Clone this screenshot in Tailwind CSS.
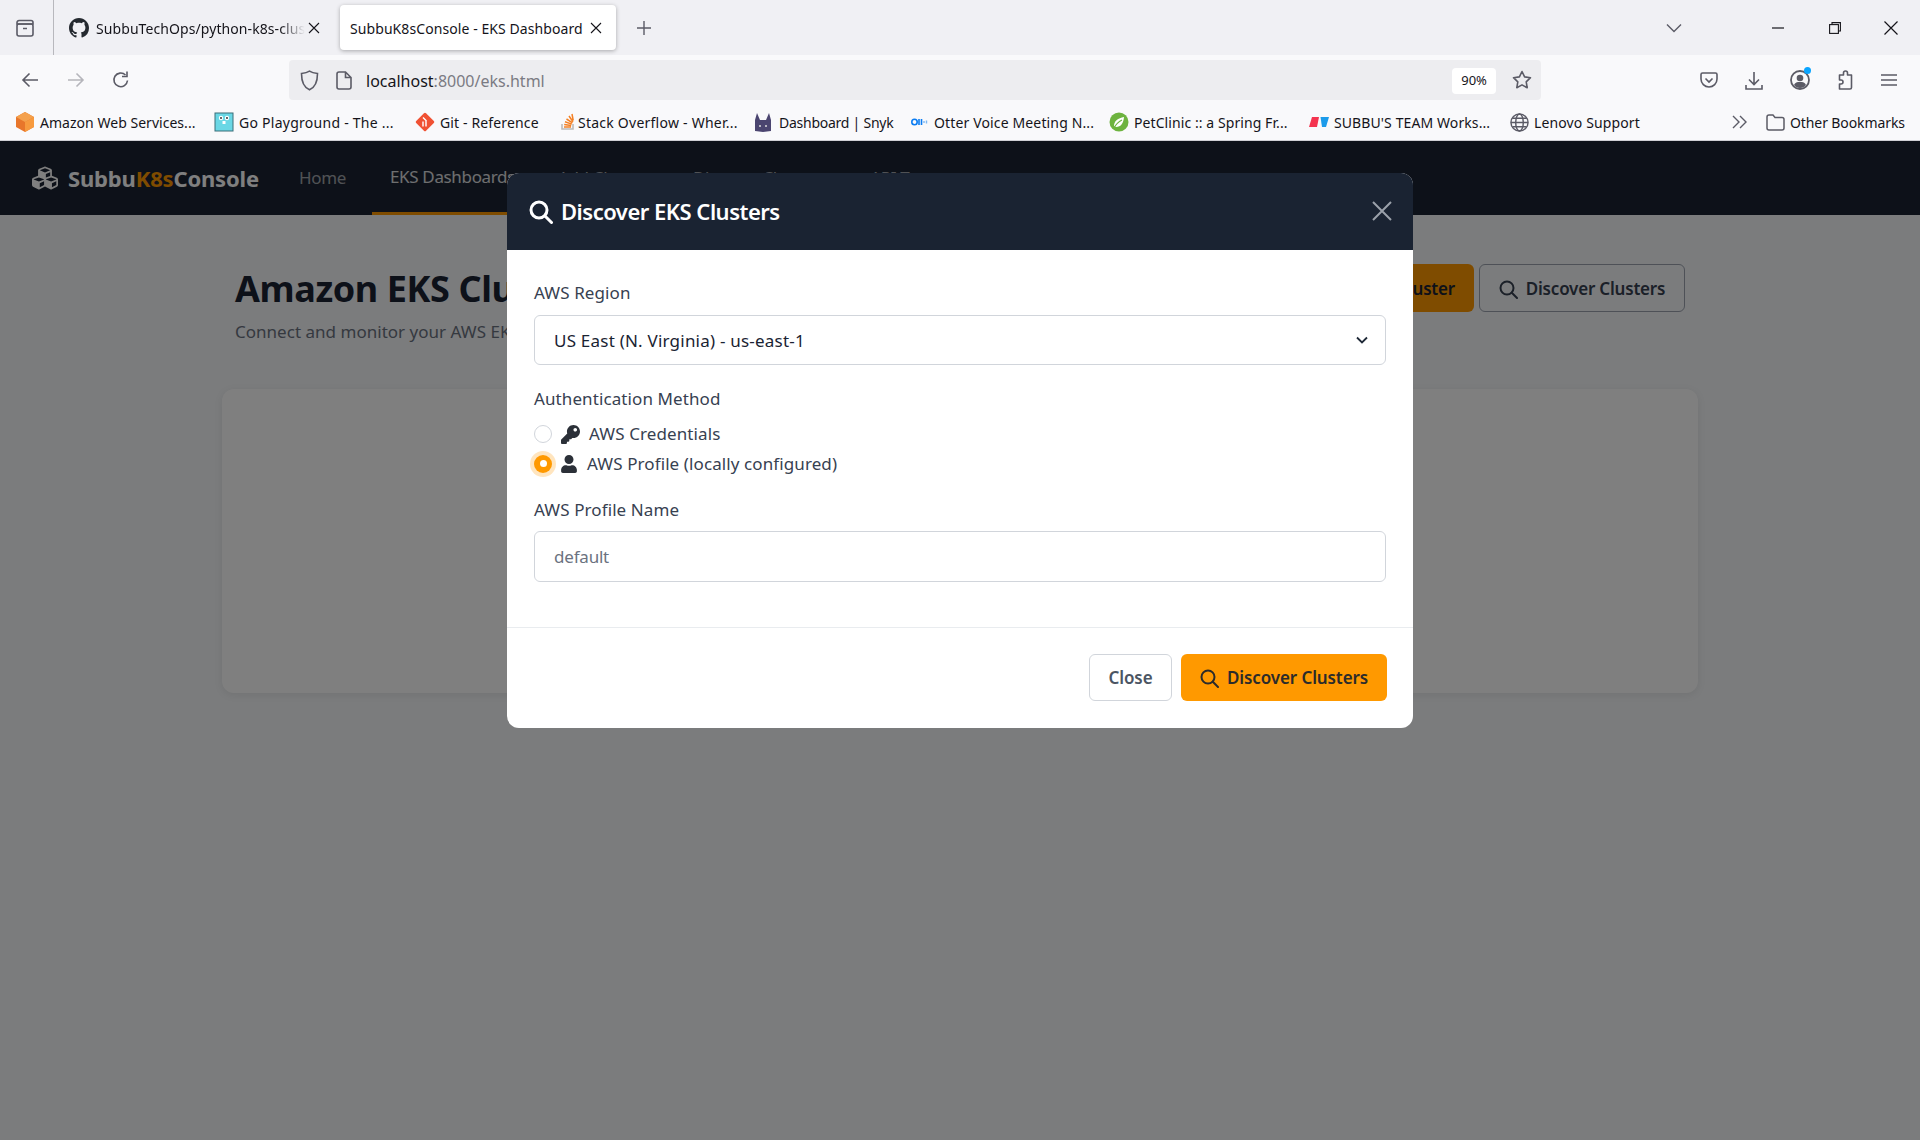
<!DOCTYPE html>
<html lang="en">
<head>
<meta charset="utf-8">
<title>SubbuK8sConsole - EKS Dashboard</title>
<script src="https://cdn.jsdelivr.net/npm/@tailwindcss/browser@4"></script>
</head>
<body class="w-[1920px] h-[1140px] overflow-hidden bg-[#f6f8fa] font-['Noto_Sans',sans-serif] flex flex-col">

<!-- tab strip -->
<div class="h-[55px] shrink-0 bg-[#f0f0f4] flex items-center text-[14px] tracking-[0.08px] text-[#15141a]">
  <div class="w-[54px] h-full shrink-0 border-r border-[#b8b8bd] flex items-center pl-[15px]">
    <svg class="w-[20px] h-[20px]" viewBox="0 0 20 20" fill="none" stroke="#5b5b66" stroke-width="1.6"><rect x="2" y="6" width="16" height="12" rx="2"/><path d="M4 2.5h12a2 2 0 0 1 2 2V6H2V4.5a2 2 0 0 1 2-2zM8 10.5h4"/></svg>
  </div>
  <div class="w-[286px] h-full shrink-0 flex items-center pl-[15px] relative">
    <svg class="w-[20px] h-[20px] shrink-0" viewBox="0 0 16 16" fill="#24292f"><path d="M8 0C3.58 0 0 3.58 0 8c0 3.54 2.29 6.53 5.47 7.59.4.07.55-.17.55-.38 0-.19-.01-.82-.01-1.49-2.01.37-2.53-.49-2.69-.94-.09-.23-.48-.94-.82-1.13-.28-.15-.68-.52-.01-.53.63-.01 1.08.58 1.23.82.72 1.21 1.87.87 2.33.66.07-.52.28-.87.51-1.07-1.78-.2-3.64-.89-3.64-3.95 0-.87.31-1.59.82-2.15-.08-.2-.36-1.02.08-2.12 0 0 .67-.21 2.2.82.64-.18 1.32-.27 2-.27.68 0 1.36.09 2 .27 1.53-1.04 2.2-.82 2.2-.82.44 1.1.16 1.92.08 2.12.51.56.82 1.27.82 2.15 0 3.07-1.87 3.75-3.65 3.95.29.25.54.73.54 1.48 0 1.07-.01 1.93-.01 2.2 0 .21.15.46.55.38A8.013 8.013 0 0016 8c0-4.42-3.58-8-8-8z"/></svg>
    <span class="ml-[7px] mt-[1px] w-[209px] overflow-hidden whitespace-nowrap [mask-image:linear-gradient(to_right,black_88%,transparent)]">SubbuTechOps/python-k8s-cluster</span>
    <svg class="absolute left-[254px] w-[12px] h-[12px]" viewBox="0 0 12 12" stroke="#15141a" stroke-width="1.1"><path d="M1 1l10 10M11 1L1 11"/></svg>
  </div>
  <div class="w-[276px] h-[45px] shrink-0 bg-white rounded-[4px] shadow-[0_1px_4px_rgba(0,0,0,0.3)] flex items-center pl-[10px] relative">
    <span class="mt-[1px] whitespace-nowrap">SubbuK8sConsole - EKS Dashboard</span>
    <svg class="absolute right-[14px] w-[12px] h-[12px]" viewBox="0 0 12 12" stroke="#15141a" stroke-width="1.1"><path d="M1 1l10 10M11 1L1 11"/></svg>
  </div>
  <svg class="ml-[20px] w-[16px] h-[16px]" viewBox="0 0 16 16" stroke="#5b5b66" stroke-width="1.4"><path d="M8 1v14M1 8h14"/></svg>
  <div class="ml-auto flex items-center h-full">
    <svg class="w-[16px] h-[10px]" viewBox="0 0 16 10" fill="none" stroke="#5b5b66" stroke-width="1.4"><path d="M1 1.500l7 7 7-7"/></svg>
    <svg class="ml-[90px] w-[12px] h-[2px]" viewBox="0 0 12 2" stroke="#15141a" stroke-width="1.2"><path d="M0 1h12"/></svg>
    <svg class="ml-[45px] w-[12px] h-[12px]" viewBox="0 0 12 12" fill="none" stroke="#15141a" stroke-width="1.1"><rect x=".6" y="2.6" width="8.8" height="8.8"/><path d="M3 2.6V.6h8.4V9H9.4"/></svg>
    <svg class="ml-[43px] mr-[22px] w-[14px] h-[14px]" viewBox="0 0 14 14" stroke="#15141a" stroke-width="1.2"><path d="M.5.5l13 13M13.500.5l-13 13"/></svg>
  </div>
</div>

<!-- toolbar -->
<div class="h-[45px] shrink-0 bg-[#f9f9fb] flex items-center">
  <div class="w-[289px] mt-[5px] shrink-0 flex items-center pl-[21px]">
    <svg class="w-[18px] h-[18px]" viewBox="0 0 18 18" fill="none" stroke="#5b5b66" stroke-width="1.6"><path d="M17 9H2M8.500 2.500L2 9l6.500 6.500"/></svg>
    <svg class="ml-[28px] w-[18px] h-[18px]" viewBox="0 0 18 18" fill="none" stroke="#b5b5bb" stroke-width="1.6"><path d="M1 9h15M9.500 2.500L16 9l-6.500 6.500"/></svg>
    <svg class="ml-[26px] w-[20px] h-[20px]" viewBox="0 0 20 20" fill="none" stroke="#5b5b66" stroke-width="1.6"><path d="M16.500 10.500A6.800 6.800 0 1 1 14.500 5"/><path d="M16 1.500V6.500H11" /></svg>
  </div>
  <div class="w-[1252px] h-[40px] mt-[5px] shrink-0 bg-[#ededf0] rounded-[4px] flex items-center pl-[11px] pr-[9px]">
    <svg class="w-[19px] h-[21px] shrink-0" viewBox="0 0 19 21" fill="none" stroke="#5b5b66" stroke-width="1.6"><path d="M9.500 1.200c2 1.300 4.800 2 8 2.300 0 8-1.500 13.500-8 16.300C3 17 1.500 11.500 1.500 3.500c3.200-.3 6-1 8-2.300z"/></svg>
    <svg class="ml-[17px] w-[16px] h-[19px] shrink-0" viewBox="0 0 16 19" fill="none" stroke="#5b5b66" stroke-width="1.6"><path d="M3 1h6.500L15 6.500V16a2 2 0 0 1-2 2H3a2 2 0 0 1-2-2V3a2 2 0 0 1 2-2zM9.500 1v5.500H15"/></svg>
    <span class="ml-[14px] mt-[1px] text-[16px] tracking-[0px] text-[#15141a]">localhost<span class="text-[#7b7b83]">:8000/eks.html</span></span>
    <span class="ml-auto w-[44px] h-[26px] mt-[1px] bg-white rounded-[4px] text-[13px] tracking-[-0.1px] text-[#15141a] flex items-center justify-center">90%</span>
    <svg class="ml-[16px] w-[20px] h-[20px] shrink-0" viewBox="0 0 20 20" fill="none" stroke="#5b5b66" stroke-width="1.6" stroke-linejoin="round"><path d="M10 1.500l2.600 5.400 5.900.8-4.300 4.100 1 5.900-5.200-2.800-5.200 2.800 1-5.900L1.500 7.700l5.900-.8z"/></svg>
  </div>
  <div class="flex-1 mt-[5px] flex items-center pl-[159px]">
    <svg class="w-[18px] h-[17px]" viewBox="0 0 18 17" fill="none" stroke="#5b5b66" stroke-width="1.6"><path d="M2.500 1h13A1.500 1.500 0 0 1 17 2.500V7a8 8 0 0 1-16 0V2.500A1.500 1.500 0 0 1 2.500 1zM5.500 6.500L9 10l3.500-3.500"/></svg>
    <svg class="ml-[27px] w-[18px] h-[19px]" viewBox="0 0 18 19" fill="none" stroke="#5b5b66" stroke-width="1.6"><path d="M9 1v12M4 8.500L9 13.500l5-5M1 14v4h16v-4"/></svg>
    <div class="ml-[27px] relative w-[20px] h-[20px]">
      <svg class="w-[20px] h-[20px]" viewBox="0 0 20 20"><circle cx="10" cy="10" r="9" fill="none" stroke="#5b5b66" stroke-width="1.8"/><circle cx="10" cy="8" r="3.300" fill="#5b5b66"/><path d="M4 15c1-2.500 3-3 6-3s5 .5 6 3c-1.500 1.800-3.500 3-6 3s-4.500-1.200-6-3z" fill="#5b5b66"/></svg>
      <span class="absolute -top-[3px] -right-[1px] w-[7px] h-[7px] rounded-full bg-[#0aa5ff]"></span>
    </div>
    <svg class="ml-[25px] w-[18px] h-[20px]" viewBox="0 0 18 20" fill="none" stroke="#5b5b66" stroke-width="1.6" stroke-linejoin="round"><path d="M9.500 5V3a2 2 0 0 0-4 0v2H1.500v5H3a2 2 0 0 1 0 4H1.500v5h10.500a1.500 1.500 0 0 0 1.500-1.500V5h-4z" transform="translate(3 0)"/></svg>
    <svg class="ml-[28px] w-[16px] h-[12px]" viewBox="0 0 16 12" stroke="#5b5b66" stroke-width="1.4"><path d="M0 1h16M0 6h16M0 11h16"/></svg>
  </div>
</div>

<!-- bookmarks -->
<div class="h-[41px] shrink-0 bg-[#f9f9fb] border-b border-[#cfcfd4] flex items-center pl-[15px] pt-[4px] text-[14px] text-[#15141a] whitespace-nowrap">
  <div class="w-[199px] shrink-0 flex items-center gap-[5px]">
    <svg class="w-[20px] h-[20px] shrink-0" viewBox="0 0 20 20"><path d="M10 0l9 5v10l-9 5-9-5V5z" fill="#e8762b"/><path d="M10 10l9-5v10l-9 5z" fill="#f79a3e"/><path d="M10 0l9 5-9 5-9-5z" fill="#f4a14d"/></svg>
    <span class="tracking-[0.03px]">Amazon Web Services...</span>
  </div>
  <div class="w-[201px] shrink-0 flex items-center gap-[5px]">
    <svg class="w-[20px] h-[20px] shrink-0" viewBox="0 0 20 20"><rect x="1" y="1" width="18" height="18" fill="#6ad7e5" stroke="#3b6e78"/><circle cx="7" cy="6" r="2.200" fill="#fff"/><circle cx="13" cy="6" r="2.200" fill="#fff"/><circle cx="7" cy="6" r=".9" fill="#222"/><circle cx="13" cy="6" r=".9" fill="#222"/><path d="M8.500 9h3v3h-3z" fill="#fff"/></svg>
    <span class="tracking-[0.26px]">Go Playground - The ...</span>
  </div>
  <div class="w-[142px] shrink-0 flex items-center gap-[5px]">
    <svg class="w-[20px] h-[20px] shrink-0" viewBox="0 0 20 20"><rect x="3" y="3" width="14" height="14" rx="1.500" fill="#f05133" transform="rotate(45 10 10)"/><path d="M8 5.500l3.500 3.500M11 9v5.500M8 9.500v5" stroke="#fff" stroke-width="1.400"/></svg>
    <span class="tracking-[0.14px]">Git - Reference</span>
  </div>
  <div class="w-[197px] shrink-0 flex items-center gap-[0px]">
    <svg class="w-[21px] h-[20px] shrink-0" viewBox="0 0 19 20" fill="none"><path d="M4 12v5h11v-5" stroke="#bcbbbb" stroke-width="1.600"/><path d="M6 15h7M6.200 12.500l7 1M7 9.700l6.800 2.400M8.500 7l6 3.800M11 4l4 5.700M14 2l1.200 6.500" stroke="#f48024" stroke-width="1.500"/></svg>
    <span class="tracking-[0.24px]">Stack Overflow - Wher...</span>
  </div>
  <div class="w-[157px] shrink-0 flex items-center gap-[7px]">
    <svg class="w-[18px] h-[20px] shrink-0" viewBox="0 0 18 20"><path d="M1 19V8l2-7 3 7h6l3-7 2 7v11l-8 1z" fill="#4b4570"/><circle cx="6" cy="14" r="1" fill="#ddd"/><circle cx="12" cy="14" r="1" fill="#ddd"/></svg>
    <span class="tracking-[-0.25px]">Dashboard | Snyk</span>
  </div>
  <div class="w-[198px] shrink-0 flex items-center gap-[6px]">
    <svg class="w-[17px] h-[8px] shrink-0" viewBox="0 0 17 8"><circle cx="3.500" cy="4" r="2.700" fill="none" stroke="#0b7cf2" stroke-width="1.600"/><path d="M8 1v6M10.500 1v6" stroke="#0b7cf2" stroke-width="1.600"/><path d="M13 3v2M15.500 2.500v3" stroke="#7db9f5" stroke-width="1.400"/></svg>
    <span class="tracking-[0.14px]">Otter Voice Meeting N...</span>
  </div>
  <div class="w-[200px] shrink-0 flex items-center gap-[5px]">
    <svg class="w-[20px] h-[20px] shrink-0" viewBox="0 0 20 20"><circle cx="10" cy="10" r="9.500" fill="#6db33f"/><path d="M5 14c0-5 4-8 10-9-.5 6-3 10-8 10z" fill="#fff"/><path d="M5 16c2-4 4-6 8-8" stroke="#6db33f" stroke-width="1.100" fill="none"/></svg>
    <span class="tracking-[0.08px]">PetClinic :: a Spring Fr...</span>
  </div>
  <div class="w-[201px] shrink-0 flex items-center gap-[5px]">
    <svg class="w-[20px] h-[10px] shrink-0" viewBox="0 0 20 10"><path d="M3 0h7L8 10H0z" fill="#f4344f"/><path d="M11.500 0H20l-3 10h-4z" fill="#1c9bea"/></svg>
    <span class="tracking-[0.1px]">SUBBU'S TEAM Works...</span>
  </div>
  <div class="w-[222px] shrink-0 flex items-center gap-[5px]">
    <svg class="w-[19px] h-[19px] shrink-0" viewBox="0 0 20 20" fill="none" stroke="#5b5b66" stroke-width="1.500"><circle cx="10" cy="10" r="9"/><ellipse cx="10" cy="10" rx="4" ry="9"/><path d="M1 10h18M2.500 5.500h15M2.500 14.500h15"/></svg>
    <span class="tracking-[0.12px]">Lenovo Support</span>
  </div>
  <svg class="w-[15px] h-[14px] shrink-0" viewBox="0 0 15 14" fill="none" stroke="#5b5b66" stroke-width="1.400"><path d="M1 1l6 6-6 6M8 1l6 6-6 6"/></svg>
  <div class="ml-[19px] flex items-center gap-[5px]">
    <svg class="w-[19px] h-[17px] shrink-0" viewBox="0 0 19 17" fill="none" stroke="#5b5b66" stroke-width="1.500"><path d="M1 3a2 2 0 0 1 2-2h4l2 2.500h7a2 2 0 0 1 2 2V14a2 2 0 0 1-2 2H3a2 2 0 0 1-2-2z"/></svg>
    <span class="tracking-[-0.1px]">Other Bookmarks</span>
  </div>
</div>

<!-- page -->
<div class="relative flex-1 bg-[#f6f8fa]">
  <nav class="h-[74px] bg-[#1a2332] flex items-center pl-[31px]">
    <svg class="w-[28px] h-[26px] shrink-0" viewBox="0 0 512 512" fill="#ffffff"><path d="M488.6 250.200L392 214V105.500c0-15-9.300-28.400-23.400-33.700l-100-37.500c-8.100-3.100-17.100-3.100-25.300 0l-100 37.500c-14.100 5.300-23.400 18.700-23.400 33.700V214l-96.600 36.200C9.300 255.500 0 268.900 0 283.900V394c0 13.600 7.700 26.100 19.900 32.200l100 50c10.100 5.100 22.100 5.100 32.200 0l103.900-52 103.900 52c10.100 5.100 22.100 5.100 32.200 0l100-50c12.200-6.100 19.900-18.600 19.900-32.200V283.900c0-15-9.300-28.400-23.400-33.700zM358 214.800l-85 31.900v-68.200l85-37v73.300zM154 104.100l102-38.200 102 38.200v.6l-102 41.400-102-41.400v-.6zm84 291.100l-85 42.500v-79.100l85-38.800v75.400zm0-112l-102 41.400-102-41.400v-.6l102-38.200 102 38.200v.6zm240 112l-85 42.500v-79.100l85-38.800v75.400zm0-112l-102 41.400-102-41.400v-.6l102-38.200 102 38.200v.6z"/></svg>
    <span class="ml-[9px] w-[231px] shrink-0 text-[22px] font-bold tracking-[-0.17px] text-white">Subbu<span class="text-[#ff9900]">K8s</span>Console</span>
    <span class="w-[73px] shrink-0 text-[17px] tracking-[-0.35px] text-white/60">Home</span>
    <div class="h-full w-[600px] flex items-stretch text-[17px] tracking-[-0.35px] text-white/60">
      <div class="w-[182px] border-b-[3px] border-[#ff9900] pl-[18px] flex items-center text-white/85 whitespace-nowrap">EKS Dashboards</div>
      <div class="flex items-center whitespace-nowrap pl-[4px]">Add Cluster</div>
      <div class="flex items-center whitespace-nowrap pl-[46px]">Discover Clusters</div>
      <div class="flex items-center whitespace-nowrap pl-[46px]">API Test</div>
    </div>
  </nav>
  <main class="ml-[222px] w-[1476px]">
    <div class="flex justify-between px-[13px] pt-[49px]">
      <div>
        <h1 class="mt-[1px] text-[36px] leading-[48px] font-bold tracking-[-0.4px] text-[#1a2332]">Amazon EKS Clusters</h1>
        <p class="text-[17px] leading-[24px] mt-[7px] tracking-[0.02px] text-[#6b7280]">Connect and monitor your AWS EKS clusters</p>
      </div>
      <div class="flex gap-[5px] h-[48px] text-[17px] font-semibold tracking-[-0.2px]">
        <div class="pl-[18px] pr-[19px] pt-[2px] bg-[#ff9900] rounded-[6px] text-[#1a2332] flex items-center">Add Cluster</div>
        <div class="w-[206px] pt-[2px] border border-[#9ca3af] rounded-[6px] text-[#374151] flex items-center justify-center gap-[8px]">
          <svg class="w-[19px] h-[19px]" viewBox="0 0 19 19" fill="none" stroke="#374151" stroke-width="2"><circle cx="8" cy="8" r="6.500"/><path d="M12.800 12.800L18 18" stroke-linecap="round"/></svg>
          Discover Clusters
        </div>
      </div>
    </div>
    <div class="mt-[45px] h-[304px] bg-white rounded-[12px] shadow-[0_2px_8px_rgba(0,0,0,0.08)]"></div>
  </main>

  <!-- backdrop -->
  <div class="absolute inset-0 bg-black/50"></div>

  <!-- modal -->
  <div class="absolute left-[507px] top-[32px] w-[906px] h-[555px] bg-white rounded-[12px] overflow-hidden flex flex-col">
    <div class="h-[77px] shrink-0 bg-[#1a2332] flex items-center pl-[22px] pr-[21px] text-white">
      <svg class="w-[24px] h-[24px] shrink-0" viewBox="0 0 24 24" fill="none" stroke="#ffffff" stroke-width="3"><circle cx="10" cy="10" r="8"/><path d="M16 16l6.500 6.500" stroke-linecap="round"/></svg>
      <h2 class="ml-[8px] text-[22px] font-semibold tracking-[-0.5px]">Discover EKS Clusters</h2>
      <svg class="ml-auto -mt-[1px] w-[20px] h-[20px]" viewBox="0 0 20 20" stroke="#9ba1aa" stroke-width="2"><path d="M1 1l18 18M19 1L1 19"/></svg>
    </div>
    <div class="flex-1 flex flex-col px-[27px] text-[17px] tracking-[0.1px] text-[#374151]">
      <label class="mt-[30px] h-[26px] leading-[26px]">AWS Region</label>
      <div class="mt-[9px] h-[50px] border border-[#d1d5db] rounded-[6px] flex items-center pl-[19px] pr-[17px] text-[#1a2332]">
        <span class="mt-[1px] tracking-[0.22px]">US East (N. Virginia) - us-east-1</span>
        <svg class="ml-auto w-[12px] h-[9px]" viewBox="0 0 12 9" fill="none" stroke="#1f2937" stroke-width="1.800"><path d="M1 1.500l5 5 5-5"/></svg>
      </div>
      <label class="mt-[21px] h-[26px] leading-[26px]">Authentication Method</label>
      <div class="mt-[7px] h-[30px] flex items-center">
        <span class="w-[18px] h-[18px] rounded-full border border-[#d1d5db] shrink-0"></span>
        <svg class="ml-[9px] w-[19px] h-[19px] shrink-0" viewBox="0 0 512 512" fill="#2b3038"><path d="M512 176.001C512 273.203 433.202 352 336 352c-11.220 0-22.190-1.062-32.827-3.069l-24.012 27.014A23.999 23.999 0 0 1 261.223 384H224v40c0 13.255-10.745 24-24 24h-40v40c0 13.255-10.745 24-24 24H24c-13.255 0-24-10.745-24-24v-78.059c0-6.365 2.529-12.470 7.029-16.971l161.802-161.802C163.108 213.814 160 195.271 160 176 160 78.798 238.797.001 335.999 0 433.488-.001 512 78.511 512 176.001zM336 128c0 26.510 21.490 48 48 48s48-21.490 48-48-21.490-48-48-48-48 21.490-48 48z"/></svg>
        <span class="ml-[9px]">AWS Credentials</span>
      </div>
      <div class="h-[29px] flex items-center">
        <span class="w-[18px] h-[18px] rounded-full bg-[#ff9900] shrink-0 flex items-center justify-center shadow-[0_0_0_4px_rgba(255,153,0,0.25)]"><span class="w-[7px] h-[7px] rounded-full bg-white"></span></span>
        <svg class="ml-[9px] w-[16px] h-[18px] shrink-0" viewBox="0 0 448 512" fill="#2b3038"><path d="M224 256c70.700 0 128-57.300 128-128S294.700 0 224 0 96 57.300 96 128s57.300 128 128 128zm89.600 32h-16.700c-22.200 10.200-46.900 16-72.900 16s-50.600-5.800-72.900-16h-16.700C60.200 288 0 348.200 0 422.400V464c0 26.500 21.500 48 48 48h352c26.500 0 48-21.500 48-48v-41.600c0-74.200-60.200-134.400-134.400-134.400z"/></svg>
        <span class="ml-[10px]">AWS Profile (locally configured)</span>
      </div>
      <label class="mt-[19px] h-[26px] leading-[26px]">AWS Profile Name</label>
      <div class="mt-[8px] h-[51px] border border-[#d1d5db] rounded-[6px] flex items-center pl-[19px] tracking-[-0.2px] text-[#6b7280]">default</div>
    </div>
    <div class="h-[101px] shrink-0 border-t border-[#e9ecef] flex items-start justify-end gap-[9px] pt-[26px] pr-[26px] text-[17px] tracking-[-0.1px] font-semibold">
      <div class="w-[83px] h-[47px] pt-[1px] border border-[#d1d5db] rounded-[6px] text-[#4b5563] flex items-center justify-center">Close</div>
      <div class="w-[206px] h-[47px] pt-[1px] bg-[#ff9900] rounded-[6px] text-[#2b2b2b] flex items-center justify-center gap-[8px]">
        <svg class="w-[19px] h-[19px]" viewBox="0 0 19 19" fill="none" stroke="#2b2b2b" stroke-width="2"><circle cx="8" cy="8" r="6.500"/><path d="M12.800 12.800L18 18" stroke-linecap="round"/></svg>
        Discover Clusters
      </div>
    </div>
  </div>
</div>
</body>
</html>
